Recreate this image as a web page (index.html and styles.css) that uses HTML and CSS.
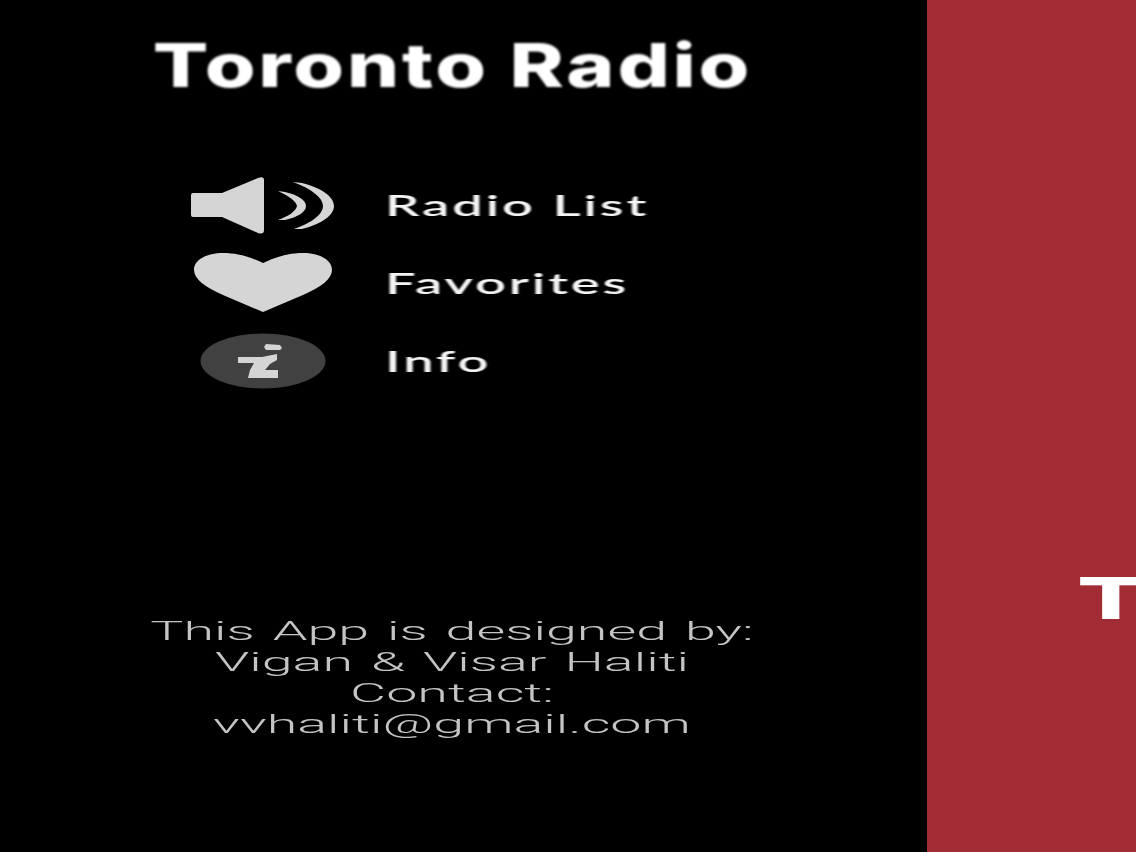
FILE: index.html
```html
<!DOCTYPE html>
<html lang="en">
<head>
<meta charset="utf-8">
<title>Toronto Radio</title>
<link rel="stylesheet" href="styles.css">
</head>
<body>
<div class="app">
  <aside class="drawer">
    <h1 class="title">Toronto Radio</h1>
    <nav class="menu">
      <div class="row">
        <svg class="icon" viewBox="0 0 146 78" aria-hidden="true">
          <path class="light" d="M1 29Q1 27 3 27L32 27L68 12Q74 10 74 14L74 64Q74 69 68 67L32 51L3 51Q1 51 1 49Z"/>
          <path class="light" d="M88 25L95 26C108 29 116 34 116 40C116 46 108 51 95 54L88 54C99 50 106 45 107 40C106 35 99 30 88 25Z"/>
          <path class="light" d="M103 16L112 17C132 22 144 31 144 40C144 49 132 58 112 63L104 63C122 57 133 48 133 40C133 32 122 23 103 16Z"/>
        </svg>
        <span class="label">Radio List</span>
      </div>
      <div class="row">
        <svg class="icon" viewBox="0 0 146 78" aria-hidden="true">
          <path class="light" d="M73 68L33 51C15 43 4 35 4 26C4 15 18 9 33 9C50 9 62 14 73 19C84 14 96 9 113 9C128 9 142 15 142 26C142 35 131 43 113 51Z"/>
        </svg>
        <span class="label">Favorites</span>
      </div>
      <div class="row">
        <svg class="icon" viewBox="0 0 146 78" aria-hidden="true">
          <ellipse class="dark" cx="73" cy="39" rx="62.500" ry="27.500"/>
          <path class="light" d="M76 22L90 23L92 26L90 28L76 28L74 25Z"/>
          <path class="light" d="M48 35L72 35L87 32L87 38L80 42L75 48L88 48L88 56L58 56L60 48L64 41L48 41Z"/>
        </svg>
        <span class="label">Info</span>
      </div>
    </nav>
    <footer class="credits">
      <p>This App is designed by:</p>
      <p>Vigan &amp; Visar Haliti</p>
      <p>Contact:</p>
      <p>vvhaliti@gmail.com</p>
    </footer>
  </aside>
  <main class="pane">
    <div class="pane-title">T</div>
  </main>
</div>
</body>
</html>
```

FILE: styles.css
```css
* { box-sizing: border-box; }
html, body { margin: 0; height: 100%; background: #000; overflow: hidden; }
.app { display: flex; width: 1136px; height: 852px; }
.drawer {
  width: 927px;
  flex: none;
  background: #000;
  padding: 30px 0 0;
  display: flex;
  flex-direction: column;
}
.title {
  margin: 0 22px 0 0;
  height: 70px;
  text-align: center;
  font: 800 60px/70px "Inter", sans-serif;
  letter-spacing: 2px;
  color: #fff;
  transform: scaleX(1.37);
  filter: blur(0.8px);
}
.menu { margin-top: 66px; padding-left: 190px; display: flex; flex-direction: column; }
.row { display: flex; align-items: center; height: 78px; gap: 49px; }
.icon { width: 146px; height: 78px; flex: none; filter: blur(0.5px); }
.light { fill: #d6d5d6; }
.dark { fill: #414141; }
.label {
  font: 600 28px/78px "Lato", sans-serif;
  color: #f4f4f4;
  letter-spacing: 1.5px;
  transform: scaleX(1.94);
  transform-origin: left center;
  filter: blur(0.6px);
}
.credits {
  margin: 216px 23px 0 0;
  text-align: center;
  font: 300 26px/31px "Roboto", sans-serif;
  word-spacing: 2px;
  color: #c4c4c4;
  transform: scaleX(2.14);
  filter: blur(0.3px);
}
.credits p { margin: 0; }
.pane {
  flex: 1;
  min-width: 0;
  background: #a22c34;
  overflow: hidden;
  padding: 563px 0 0 150px;
}
.pane-title {
  font: 800 58px/70px "Inter", sans-serif;
  color: #fff;
  transform: scaleX(1.72);
  transform-origin: left center;
  width: 36px;
}
```
